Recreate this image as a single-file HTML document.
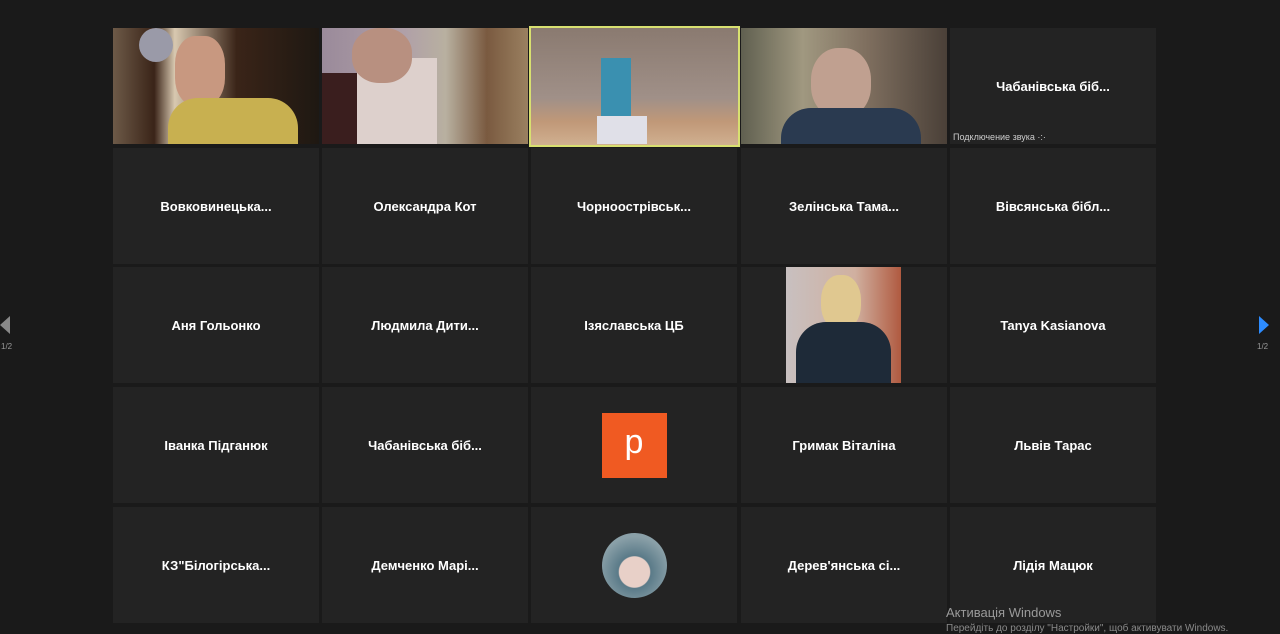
<!DOCTYPE html>
<html><head><meta charset="utf-8"><style>
body{margin:0;width:1280px;height:634px;background:#1a1a1a;overflow:hidden;font-family:"Liberation Sans","DejaVu Sans",sans-serif;position:relative}
.t{position:absolute;width:206px;height:116px;background:#232323;color:#fff;font-weight:bold;font-size:13px;display:flex;align-items:center;justify-content:center;overflow:hidden}
.v{position:absolute;overflow:hidden}
.s{position:absolute;font-size:9px;color:#ccc}
</style></head><body>
<!-- row 1 -->
<div class="v" style="left:113px;top:28px;width:206px;height:116px;background:linear-gradient(90deg,#6d5a48 0,#3a2418 20%,#d8c8b0 30%,#3a2418 60%,#1e1812 100%)">
 <div style="position:absolute;left:26px;top:0;width:34px;height:34px;border-radius:50%;background:#9a9aa8"></div>
 <div style="position:absolute;left:62px;top:8px;width:50px;height:70px;border-radius:40%;background:#c89880"></div>
 <div style="position:absolute;left:55px;top:70px;width:130px;height:50px;border-radius:30px 30px 0 0;background:#c8b050"></div>
</div>
<div class="v" style="left:322px;top:28px;width:206px;height:116px;background:linear-gradient(90deg,#9a8a9a 0,#b0a0a8 40%,#b8b0a0 60%,#7a5a40 80%,#9a8060 100%)">
 <div style="position:absolute;left:0;top:45px;width:100px;height:71px;background:#3a1e1e"></div>
 <div style="position:absolute;left:35px;top:30px;width:80px;height:86px;background:#ddd0cc"></div>
 <div style="position:absolute;left:30px;top:0;width:60px;height:55px;border-radius:45%;background:#b89080"></div>
</div>
<div class="v" style="left:529px;top:26px;width:207px;height:117px;border:2px solid #d8e070;background:linear-gradient(180deg,#8a7a70 0,#a09088 60%,#c09878 80%,#d0b090 100%)">
 <div style="position:absolute;left:70px;top:30px;width:30px;height:60px;background:#3a90b0"></div>
 <div style="position:absolute;left:66px;top:88px;width:50px;height:28px;background:#e0e0e8"></div>
</div>
<div class="v" style="left:741px;top:28px;width:206px;height:116px;background:linear-gradient(90deg,#606050 0,#a09880 30%,#807060 60%,#4a4038 100%)">
 <div style="position:absolute;left:70px;top:20px;width:60px;height:70px;border-radius:45%;background:#c0a090"></div>
 <div style="position:absolute;left:40px;top:80px;width:140px;height:40px;border-radius:30px 30px 0 0;background:#2a3a50"></div>
</div>
<div class="t" style="left:950px;top:28px">Чабанівська біб...</div>
<div class="s" style="left:953px;top:132px">Подключение звука ·:·</div>
<!-- row 2 -->
<div class="t" style="left:113px;top:148px">Вовковинецька...</div>
<div class="t" style="left:322px;top:148px">Олександра Кот</div>
<div class="t" style="left:531px;top:148px">Чорноострівськ...</div>
<div class="t" style="left:741px;top:148px">Зелінська Тама...</div>
<div class="t" style="left:950px;top:148px">Вівсянська бібл...</div>
<!-- row 3 -->
<div class="t" style="left:113px;top:267px">Аня Гольонко</div>
<div class="t" style="left:322px;top:267px">Людмила Дити...</div>
<div class="t" style="left:531px;top:267px">Ізяславська ЦБ</div>
<div class="t" style="left:741px;top:267px"><div style="position:absolute;left:45px;top:0;width:115px;height:116px;background:linear-gradient(90deg,#c8c0c0,#d0b0a0 60%,#b05a40)">
<div style="position:absolute;left:35px;top:8px;width:40px;height:55px;border-radius:45%;background:#e0c890"></div>
<div style="position:absolute;left:10px;top:55px;width:95px;height:61px;border-radius:30px 30px 0 0;background:#1e2a38"></div></div></div>
<div class="t" style="left:950px;top:267px">Tanya Kasianova</div>
<!-- row 4 -->
<div class="t" style="left:113px;top:387px">Іванка Підганюк</div>
<div class="t" style="left:322px;top:387px">Чабанівська біб...</div>
<div class="t" style="left:531px;top:387px"><div style="width:65px;height:65px;background:#f05a22;color:#fff;font-size:34px;font-weight:normal;display:flex;align-items:center;justify-content:center;padding-bottom:6px;box-sizing:border-box">p</div></div>
<div class="t" style="left:741px;top:387px">Гримак Віталіна</div>
<div class="t" style="left:950px;top:387px">Львів Тарас</div>
<!-- row 5 -->
<div class="t" style="left:113px;top:507px">КЗ"Білогірська...</div>
<div class="t" style="left:322px;top:507px">Демченко Марі...</div>
<div class="t" style="left:531px;top:507px"><div style="width:65px;height:65px;border-radius:50%;background:radial-gradient(circle at 50% 60%,#e8d0c8 0 30%,#5a7a88 32%,#8aa0a8 70%)"></div></div>
<div class="t" style="left:741px;top:507px">Дерев'янська сі...</div>
<div class="t" style="left:950px;top:507px">Лідія Мацюк</div>
<!-- arrows -->
<div style="position:absolute;left:0;top:316px;width:0;height:0;border-top:9px solid transparent;border-bottom:9px solid transparent;border-right:10px solid #888"></div>
<div class="s" style="left:1px;top:342px;font-size:8px;color:#999">1/2</div>
<div style="position:absolute;left:1259px;top:316px;width:0;height:0;border-top:9px solid transparent;border-bottom:9px solid transparent;border-left:10px solid #2d8cff"></div>
<div class="s" style="left:1257px;top:342px;font-size:8px;color:#999">1/2</div>
<div style="position:absolute;left:946px;top:605px;color:#9a9a9a;font-size:13px">Активація Windows</div>
<div style="position:absolute;left:946px;top:623px;color:#8a8a8a;font-size:10px">Перейдіть до розділу "Настройки", щоб активувати Windows.</div>
</body></html>
